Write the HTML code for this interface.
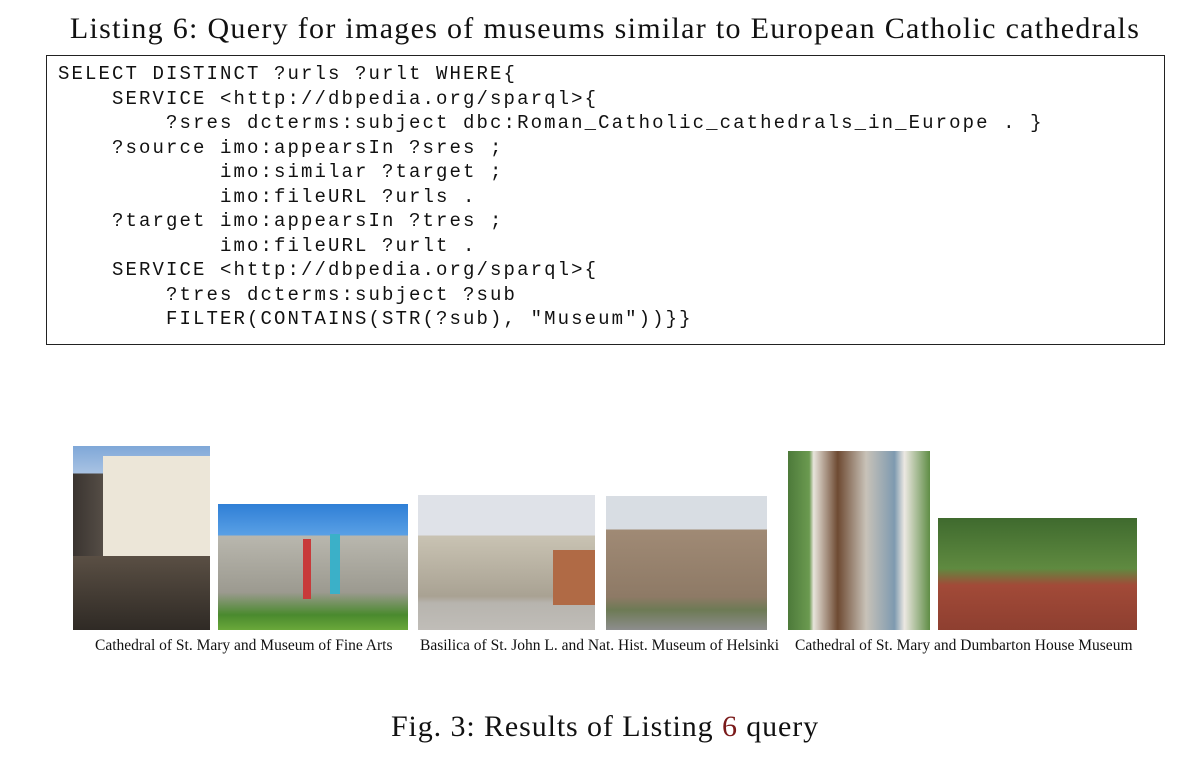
<!DOCTYPE html>
<html><head><style>
body{margin:0;width:1200px;height:772px;background:#fff;position:relative;overflow:hidden;font-family:"Liberation Serif",serif;color:#111}
.t{position:absolute;left:0;width:1210px;text-align:center;top:12px;font-size:30px;letter-spacing:1.3px}
.box{position:absolute;left:46px;top:55px;width:1117px;height:288px;border:1.5px solid #222}
pre{position:absolute;left:58px;top:62px;margin:0;font-family:"Liberation Mono",monospace;font-size:19px;letter-spacing:2.1px;line-height:24.5px;color:#111}
.im{position:absolute;overflow:hidden}
.cap{position:absolute;top:637px;font-size:15.5px;white-space:nowrap}
.f{position:absolute;left:0;width:1210px;text-align:center;top:710px;font-size:30px;letter-spacing:0.9px}
</style></head><body>
<div class="t">Listing 6: Query for images of museums similar to European Catholic cathedrals</div>
<div class="box"></div>
<pre>SELECT DISTINCT ?urls ?urlt WHERE{
    SERVICE &lt;http://dbpedia.org/sparql&gt;{
        ?sres dcterms:subject dbc:Roman_Catholic_cathedrals_in_Europe . }
    ?source imo:appearsIn ?sres ;
            imo:similar ?target ;
            imo:fileURL ?urls .
    ?target imo:appearsIn ?tres ;
            imo:fileURL ?urlt .
    SERVICE &lt;http://dbpedia.org/sparql&gt;{
        ?tres dcterms:subject ?sub
        FILTER(CONTAINS(STR(?sub), "Museum"))}}</pre>

<div class="im" style="left:73px;top:446px;width:137px;height:184px;background:linear-gradient(180deg,#7fa7d8 0%,#a9c3e3 15%,transparent 15%),linear-gradient(90deg,#3a3430 0%,#6b6258 40%,#d9d3c6 60%,#efeae0 100%)">
<div style="position:absolute;left:30px;top:10px;width:107px;height:110px;background:#ece6d8"></div>
<div style="position:absolute;left:0;top:110px;width:137px;height:74px;background:linear-gradient(180deg,#5a4f44,#2f2a25)"></div></div>
<div class="im" style="left:218px;top:504px;width:190px;height:126px;background:linear-gradient(180deg,#2f7fd6 0%,#5aa0e5 25%,#b9b7ae 25%,#9c9a90 70%,#4a8a2e 88%,#6aa83a 100%)">
<div style="position:absolute;left:85px;top:35px;width:8px;height:60px;background:#c83a3a"></div>
<div style="position:absolute;left:112px;top:30px;width:10px;height:60px;background:#3bb0c8"></div></div>
<div class="im" style="left:418px;top:495px;width:177px;height:135px;background:linear-gradient(180deg,#dfe2e8 0%,#dfe2e8 30%,#c9c3b3 30%,#a9a293 75%,#b7b4ae 80%,#c0bdb8 100%)">
<div style="position:absolute;left:135px;top:55px;width:42px;height:55px;background:#b06a45"></div></div>
<div class="im" style="left:606px;top:496px;width:161px;height:134px;background:linear-gradient(180deg,#d8dde3 0%,#d8dde3 25%,#a08a75 25%,#8e7a66 75%,#6d7a55 85%,#8d8d8d 100%)"></div>
<div class="im" style="left:788px;top:451px;width:142px;height:179px;background:linear-gradient(90deg,#4d7a3a 0%,#6b9a50 15%,#e8e4dc 18%,#6e4a32 35%,#c8c2b8 55%,#7e9ab0 75%,#ece8e2 82%,#5f8d45 100%)"></div>
<div class="im" style="left:938px;top:518px;width:199px;height:112px;background:linear-gradient(180deg,#3f6a2e 0%,#5f8a40 45%,#a24a38 60%,#8e3f30 100%)"></div>

<div class="cap" style="left:95px">Cathedral of St. Mary and Museum of Fine Arts</div>
<div class="cap" style="left:420px">Basilica of St. John L. and Nat. Hist. Museum of Helsinki</div>
<div class="cap" style="left:795px">Cathedral of St. Mary and Dumbarton House Museum</div>
<div class="f">Fig. 3: Results of Listing <span style="color:#7a1a1a">6</span> query</div>
</body></html>
